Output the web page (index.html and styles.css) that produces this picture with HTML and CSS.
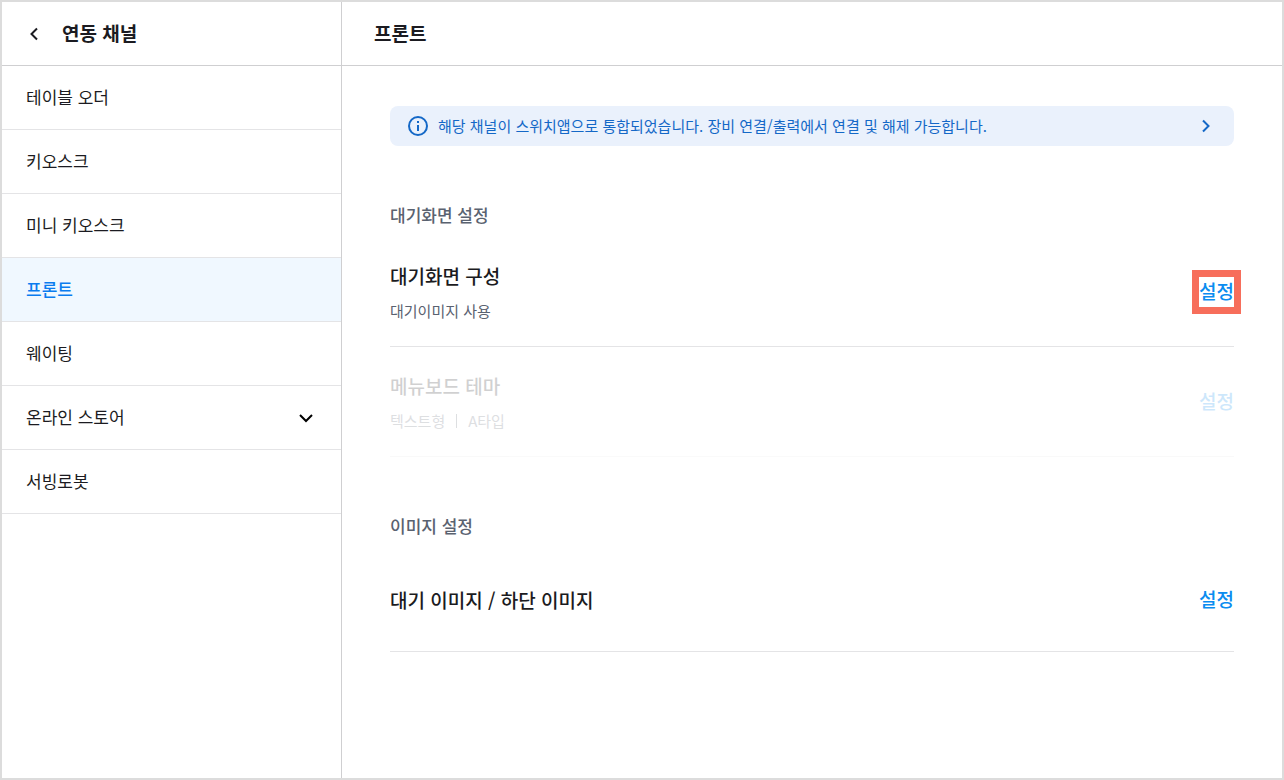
FILE: index.html
```html
<!DOCTYPE html>
<html lang="ko">
<head>
    <meta charset="UTF-8">
    <meta name="viewport" content="width=device-width, initial-scale=1.0">
    <title>연동 채널</title>
    <link rel="stylesheet" href="styles.css">
</head>
<body>
    <div class="app">
        <aside class="sidebar">
            <header class="header sidebar-header">
                <button type="button" class="back" aria-label="뒤로">
                    <svg width="24" height="24" viewBox="0 0 24 24" fill="none" stroke="currentColor" stroke-width="2"><path d="M15 6.5L9.5 12L15 17.5"/></svg>
                </button>
                <h2 class="title">연동 채널</h2>
            </header>
            <nav class="menu">
                <a class="menu-item" href="#">테이블 오더</a>
                <a class="menu-item" href="#">키오스크</a>
                <a class="menu-item" href="#">미니 키오스크</a>
                <a class="menu-item active" href="#" aria-current="page">프론트</a>
                <a class="menu-item" href="#">웨이팅</a>
                <a class="menu-item" href="#">
                    <span>온라인 스토어</span>
                    <svg width="24" height="24" viewBox="0 0 24 24" fill="none" stroke="#000" stroke-width="2"><path d="M6 10L12 16L18 10"/></svg>
                </a>
                <a class="menu-item" href="#">서빙로봇</a>
            </nav>
        </aside>

        <main class="main">
            <header class="header main-header">
                <h1 class="title">프론트</h1>
            </header>
            <div class="content">
                <a class="notice" href="#">
                    <svg width="24" height="24" viewBox="0 0 24 24" fill="none" stroke="currentColor" stroke-width="2"><circle cx="12" cy="12" r="9"/><path d="M12 11V17M12 7V9"/></svg>
                    <span class="notice-text">해당 채널이 스위치앱으로 통합되었습니다. 장비 연결/출력에서 연결 및 해제 가능합니다.</span>
                    <svg width="24" height="24" viewBox="0 0 24 24" fill="none" stroke="currentColor" stroke-width="2"><path d="M9 6.5L14.5 12L9 17.5"/></svg>
                </a>

                <section class="section">
                    <h3 class="section-title">대기화면 설정</h3>
                    <div class="row row-tall">
                        <div class="row-text">
                            <h4 class="row-title">대기화면 구성</h4>
                            <p class="row-desc">대기이미지 사용</p>
                        </div>
                        <button type="button" class="setting highlight">설정</button>
                    </div>
                    <div class="row row-tall disabled">
                        <div class="row-text">
                            <h4 class="row-title">메뉴보드 테마</h4>
                            <p class="row-desc"><span>텍스트형</span><span class="bar"></span><span>A타입</span></p>
                        </div>
                        <button type="button" class="setting" disabled>설정</button>
                    </div>
                </section>

                <section class="section">
                    <h3 class="section-title">이미지 설정</h3>
                    <div class="row">
                        <h4 class="row-title">대기 이미지 / 하단 이미지</h4>
                        <button type="button" class="setting">설정</button>
                    </div>
                </section>
            </div>
        </main>
    </div>
</body>
</html>
```
FILE: styles.css
```css
* {
    box-sizing: border-box;
}
body {
    margin: 0;
    font-family: "Noto Sans CJK KR", sans-serif;
    color: #1b1b21;
    background-color: #fff;
}
h1, h2, h3, h4, p {
    margin: 0;
}
a {
    color: inherit;
    text-decoration: none;
}
button {
    padding: 0;
    border: none;
    background: none;
    font-family: inherit;
    color: inherit;
    cursor: pointer;
}
svg {
    display: block;
    flex-shrink: 0;
}
.app {
    display: flex;
    min-height: 100vh;
    border: 2px solid #dcdcdc;
}
.sidebar {
    flex: 0 0 340px;
    border-right: 1px solid #cfcfd1;
}
.header {
    display: flex;
    align-items: center;
    height: 64px;
    border-bottom: 1px solid #cfcfd1;
}
.sidebar-header {
    gap: 16px;
    padding: 0 20px;
}
.main-header {
    padding: 0 32px;
}
.title {
    padding-bottom: 2px;
    font-size: 19px;
    line-height: 28px;
    font-weight: 700;
}
.menu-item {
    display: flex;
    align-items: center;
    justify-content: space-between;
    height: 64px;
    padding: 0 23px 2px 24px;
    border-bottom: 1px solid #e4e4e6;
    font-size: 17px;
}
.menu-item.active {
    background-color: #f0f8ff;
    color: #0a7cef;
    font-weight: 500;
}
.main {
    flex: 1;
    min-width: 0;
}
.content {
    padding: 40px 48px;
}
.notice {
    display: flex;
    align-items: center;
    gap: 8px;
    min-height: 40px;
    padding: 0 16px;
    border-radius: 8px;
    background-color: #eaf1fc;
    color: #1468c7;
    font-size: 15px;
    line-height: 24px;
}
.notice-text {
    flex: 1;
}
.section {
    margin-top: 56px;
}
.section-title {
    margin-bottom: 10px;
    font-size: 17px;
    line-height: 25px;
    font-weight: 500;
    color: #5a6270;
}
.row {
    display: flex;
    align-items: center;
    justify-content: space-between;
    min-height: 104px;
    border-bottom: 1px solid #e4e4e6;
}
.row-tall {
    min-height: 110px;
}
.row-text {
    display: flex;
    flex-direction: column;
    gap: 8px;
    padding-top: 2px;
}
.row-title {
    font-size: 19px;
    line-height: 28px;
    font-weight: 500;
}
.row-desc {
    display: flex;
    align-items: center;
    font-size: 15px;
    line-height: 26px;
    color: #5a6270;
}
.bar {
    width: 1px;
    height: 14px;
    margin: 0 11px;
    background-color: #5a6270;
}
.setting {
    padding-bottom: 2px;
    font-size: 19px;
    line-height: 28px;
    font-weight: 500;
    color: #0a8cf0;
}
.highlight {
    outline: 7px solid #f76e5b;
}
.disabled {
    opacity: 0.2;
}
```
